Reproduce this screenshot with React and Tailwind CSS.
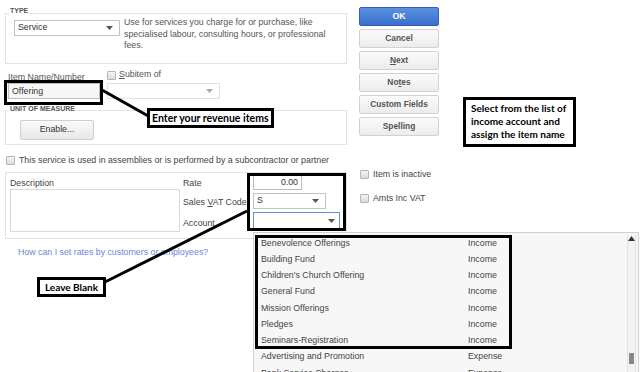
import React from 'react';

const accounts = [
  { name: 'Benevolence Offerings', type: 'Income' },
  { name: 'Building Fund', type: 'Income' },
  { name: "Children's Church Offering", type: 'Income' },
  { name: 'General Fund', type: 'Income' },
  { name: 'Mission Offerings', type: 'Income' },
  { name: 'Pledges', type: 'Income' },
  { name: 'Seminars-Registration', type: 'Income' },
  { name: 'Advertising and Promotion', type: 'Expense' },
  { name: 'Bank Service Charges', type: 'Expense' },
];

const buttons = ['Cancel', 'Next', 'Notes', 'Custom Fields', 'Spelling'];

const Caret = () => (
  <svg width="7" height="4" viewBox="0 0 7 4" className="shrink-0">
    <path d="M0 0 L7 0 L3.5 4 Z" fill="#555" />
  </svg>
);

const Check = () => (
  <span className="inline-block w-[9px] h-[9px] shrink-0 rounded-[1px] border border-[#b5b5b5] bg-gradient-to-b from-[#f4f4f4] to-[#dcdcdc]" />
);

const Annot = ({ children, className }) => (
  <div className={`absolute border-[3px] border-black bg-white text-black font-['Lato','Open_Sans',sans-serif] font-bold ${className}`}>
    {children}
  </div>
);

export default function App() {
  return (
    <div className="relative w-[640px] h-[372px] overflow-hidden bg-white text-[8.8px] text-[#444] font-['Liberation_Sans',Arial,sans-serif]">
      <div className="flex pt-[6px]">
        {/* left column */}
        <div className="w-[342px] ml-[5px]">
          <div className="relative mt-[7px] h-[51px] border border-[#e4e4e4]">
            <span className="absolute left-[3px] -top-[7px] bg-white px-[1px] text-[7px] leading-[7px] font-bold text-[#555]">TYPE</span>
            <div className="flex pl-[8px] pt-[6px]">
              <div className="flex items-center justify-between w-[106px] h-[16px] px-[3px] pr-[6px] border border-[#c3c3c3] bg-white">
                <span className="text-[#333]">Service</span>
                <Caret />
              </div>
              <p className="ml-[4px] -mt-[3px] w-[215px] leading-[11.5px] text-[#555]">
                Use for services you charge for or purchase, like specialised labour, consulting hours, or professional fees.
              </p>
            </div>
          </div>

          <div className="flex mt-[5px] ml-[3px]">
            <div className="w-[92px]">
              <div className="h-[14px] pt-[3px] leading-[10px] text-[#555]">Item Name/Number</div>
              <div className="h-[16px] border border-[#bdbdbd] bg-[#f7f7f7] px-[3px] leading-[14px] text-[#333]">Offering</div>
            </div>
            <div className="ml-[7px] w-[113px]">
              <div className="flex items-center gap-[3px] h-[14px] pb-[2px]">
                <Check />
                <span className="text-[#555]"><span className="underline">S</span>ubitem of</span>
              </div>
              <div className="flex items-center justify-end h-[16px] pr-[6px] border border-[#e2e2e2] bg-white">
                <svg width="7" height="4" viewBox="0 0 7 4"><path d="M0 0 L7 0 L3.5 4 Z" fill="#aaa" /></svg>
              </div>
            </div>
          </div>

          <div className="relative mt-[11px] h-[35px] border border-[#e4e4e4]">
            <span className="absolute left-[3px] -top-[6px] bg-white px-[1px] text-[7px] leading-[7px] font-bold text-[#555]">UNIT OF MEASURE</span>
            <div className="pl-[14px] pt-[9px]">
              <div className="flex items-center justify-center w-[74px] h-[20px] rounded-[2px] border border-[#cfcfcf] bg-gradient-to-b from-[#fafafa] to-[#e8e8e8] text-[#333]">
                Enable...
              </div>
            </div>
          </div>

          <div className="flex items-center gap-[4px] mt-[10px] ml-[1px] h-[11px]">
            <Check />
            <span className="text-[#444]">This service is used in assemblies or is performed by a subcontractor or partner</span>
          </div>

          <div className="mt-[6px] h-[67px] border border-[#e4e4e4] flex pl-[4px]">
            <div className="w-[170px]">
              <div className="h-[16px] pt-[5px] leading-[10px]">Description</div>
              <div className="h-[43px] border border-[#d9d9d9] bg-white" />
            </div>
            <div className="ml-[3px] w-[70px] text-[#444]">
              <div className="h-[18px] pt-[5px] leading-[10px]">Rate</div>
              <div className="h-[19px] pt-[6px] leading-[10px]">Sales <span className="underline">V</span>AT Code</div>
              <div className="h-[19px] pt-[8px] leading-[10px]">Account</div>
            </div>
            <div className="pt-[2px]">
              <div className="flex items-center justify-end w-[49px] h-[15px] px-[3px] border border-[#bdbdbd] bg-white text-[#333]">0.00</div>
              <div className="flex items-center justify-between mt-[3px] w-[73px] h-[16px] pl-[3px] pr-[6px] border border-[#c3c3c3] bg-white text-[#333]">
                <span>S</span>
                <Caret />
              </div>
              <div className="flex items-center justify-end mt-[3px] w-[87px] h-[17px] pr-[4px] border border-[#6b8fd6] bg-white">
                <Caret />
              </div>
            </div>
          </div>

          <div className="mt-[7px] ml-[13px] text-[#7282d9]">How can I set rates by customers or employees?</div>
        </div>

        {/* right column */}
        <div className="ml-[12px] w-[80px]">
          <div className="flex flex-col gap-[3px] pt-[1px]">
            <div className="flex items-center justify-center h-[19px] rounded-[2px] border border-[#2f5fb8] bg-gradient-to-b from-[#5b8fe0] to-[#3c6fcc] text-white font-bold">OK</div>
            {buttons.map((b) => (
              <div key={b} className="flex items-center justify-center h-[19px] rounded-[2px] border border-[#d2d2d2] bg-gradient-to-b from-[#fbfbfb] to-[#ececec] text-[8.4px] text-[#555] font-bold">
                {b === 'Next' ? <span><span className="underline">N</span>ext</span> : b === 'Notes' ? <span>No<span className="underline">t</span>es</span> : b}
              </div>
            ))}
          </div>
          <div className="flex items-center gap-[4px] mt-[32px] ml-[1px]">
            <Check />
            <span>Item is inactive</span>
          </div>
          <div className="flex items-center gap-[4px] mt-[11px] ml-[1px]">
            <Check />
            <span>Amts Inc VAT</span>
          </div>
        </div>
      </div>

      {/* account dropdown */}
      <div className="absolute left-[253px] top-[232px] w-[386px] h-[150px] border border-[#d0d0d0] bg-[#f7f7f7] flex">
        <div className="flex-1 pt-[2px]">
          {accounts.map((a) => (
            <div key={a.name} className="flex items-center h-[16.25px] pl-[7px] text-[#444]">
              <span className="w-[207px]">{a.name}</span>
              <span>{a.type}</span>
            </div>
          ))}
        </div>
        <div className="relative w-[9px] mr-[2px] mt-[2px] border-l border-r border-[#e2e2e2] bg-[#f4f4f4]">
          <svg width="7" height="5" viewBox="0 0 7 5" className="mx-auto mt-[1px]"><path d="M0 5 L7 5 L3.5 0 Z" fill="#333" /></svg>
          <div className="absolute left-[1px] top-[118px] w-[5px] h-[11px] bg-[#888]" />
        </div>
      </div>

      {/* annotations */}
      <svg className="absolute inset-0 pointer-events-none" width="640" height="372">
        <line x1="102" y1="90" x2="150" y2="117" stroke="#000" strokeWidth="3" />
        <line x1="105" y1="282" x2="247" y2="211" stroke="#000" strokeWidth="3" />
      </svg>
      <div className="absolute left-[4px] top-[80px] w-[99px] h-[25px] border-[3px] border-black" />
      <div className="absolute left-[247px] top-[173px] w-[99px] h-[58px] border-[3px] border-black" />
      <div className="absolute left-[255px] top-[235px] w-[257px] h-[114px] border-[3px] border-black" />
      <Annot className="left-[147px] top-[108px] w-[127px] h-[20px] pl-[2px] text-[10.5px] leading-[14px]">Enter your revenue items</Annot>
      <Annot className="left-[37px] top-[277px] w-[69px] h-[20px] flex items-center justify-center text-[10px]">Leave Blank</Annot>
      <Annot className="left-[463px] top-[97px] w-[113px] h-[50px] pl-[5px] pt-[2px] text-[10px] leading-[13px]">
        Select from the list of income account and assign the item name
      </Annot>
    </div>
  );
}
